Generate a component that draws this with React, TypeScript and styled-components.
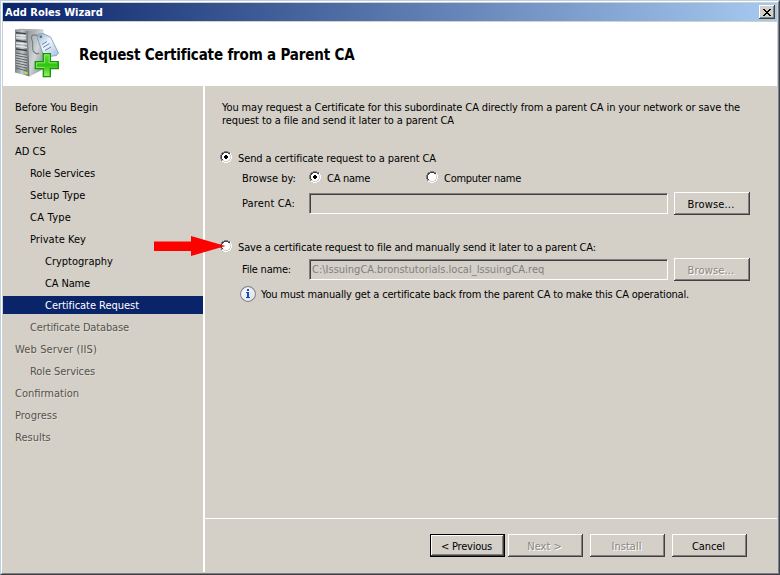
import React from 'react';
import styled, { createGlobalStyle, css } from 'styled-components';

const face = '#d4d0c8';
const navy = '#0a246a';

const GlobalStyle = createGlobalStyle`
  html, body { margin: 0; padding: 0; }
  body { background: ${face}; overflow: hidden; }
  *, *::before, *::after { box-sizing: border-box; }
`;

const Frame = styled.div`
  width: 780px;
  height: 575px;
  background: ${face};
  border-style: solid;
  border-width: 1px;
  border-color: #b9d1e6 #33455a #3c3c40 #b9d1e6;
  font: 11px/13px 'DejaVu Sans Condensed', 'DejaVu Sans', Tahoma, sans-serif;
  color: #000;
`;

const Bevel = styled.div`
  height: 100%;
  display: flex;
  flex-direction: column;
  border-style: solid;
  border-width: 1px;
  border-color: #fff #808080 #808080 #fff;
  padding: 1px;
`;

const TitleBar = styled.header`
  height: 18px;
  flex: none;
  display: flex;
  align-items: center;
  justify-content: space-between;
  padding: 0 2px;
  background: linear-gradient(to right, ${navy}, #a6caf0);
  color: #fff;
  font-weight: bold;
`;

const CloseButton = styled.button`
  width: 16px;
  height: 14px;
  padding: 0;
  display: flex;
  align-items: center;
  justify-content: center;
  background: ${face};
  border: 0;
  box-shadow: inset -1px -1px #404040, inset 1px 1px #fff, inset -2px -2px #808080;
`;

const Banner = styled.div`
  height: 64px;
  flex: none;
  margin-top: 1px;
  padding: 5px 0 0 11px;
  display: flex;
  gap: 17px;
  background: #fff;
`;

const Heading = styled.h1`
  margin: 19px 0 0;
  font-size: 15px;
  line-height: 18px;
  letter-spacing: -0.172px;
  white-space: nowrap;
`;

const Body = styled.div`
  flex: 1;
  min-height: 0;
  display: grid;
  grid-template-columns: 200px 1fr;
`;

const Nav = styled.nav`
  display: flex;
  flex-direction: column;
  gap: 4px;
  padding-top: 12px;
`;

const Step = styled.a<{ $level: number; $state?: 'current' | 'pending' }>`
  height: 18px;
  line-height: 18px;
  padding-top: 1px;
  padding-left: ${p => [12, 27, 42][p.$level]}px;
  white-space: nowrap;
  ${p => p.$state === 'current' && css`background: ${navy}; color: #fff;`}
  ${p => p.$state === 'pending' && css`color: #56534c; text-shadow: 1px 1px #e0ddd6;`}
`;

const Main = styled.main`
  display: flex;
  flex-direction: column;
  border-left: 2px solid #fff;
`;

const Content = styled.section`
  flex: 1;
  display: flex;
  flex-direction: column;
  padding: 15px 0 0 15px;
`;

const Text = styled.span<{ $track?: number }>`
  letter-spacing: ${p => p.$track ?? 0}px;
  white-space: nowrap;
`;

const Intro = styled.div`
  display: flex;
  flex-direction: column;
  padding-left: 2px;
  margin-bottom: 24px;
`;

const Option = styled.label`
  height: 14px;
  display: flex;
  align-items: center;
  gap: 6px;
`;

const BrowseBy = styled.div`
  height: 14px;
  margin-top: 6px;
  padding-left: 22px;
  display: grid;
  grid-template-columns: 67px 117px auto;
  align-items: center;
`;

const FieldRow = styled.div`
  height: 23px;
  display: grid;
  grid-template-columns: 67px 359px 76px;
  column-gap: 0;
  padding-left: 22px;
  align-items: center;
`;

const ParentRow = styled(FieldRow)`margin: 7px 0 25px;`;
const FileRow = styled(FieldRow)`margin-top: 4px;`;

const Field = styled.div`
  height: 21px;
  line-height: 17px;
  padding: 1px 0 0 2px;
  color: #808080;
  border-style: solid;
  border-width: 1px;
  border-color: #808080 #fff #fff #808080;
  box-shadow: inset 1px 1px #404040;
`;

const Button = styled.button<{ $focus?: boolean }>`
  width: 75px;
  height: 23px;
  padding: 1px 2px 0 0;
  border: ${p => (p.$focus ? '1px solid #000' : '0')};
  background: ${face};
  box-shadow: inset -1px -1px #404040, inset 1px 1px #fff, inset -2px -2px #808080;
  font: inherit;
  line-height: 13px;
  color: #000;
  &:disabled { color: #8a8882; text-shadow: 1px 1px #fff; }
`;

const BrowseButton = styled(Button)`
  width: 76px;
  margin-left: 6px;
`;

const Note = styled.div`
  height: 16px;
  margin-top: 5px;
  padding-left: 20px;
  display: flex;
  align-items: center;
  gap: 5px;
`;

const Footer = styled.footer`
  height: 54px;
  border-top: 1px solid #fff;
  padding: 15px 30px 0 0;
  display: flex;
  justify-content: flex-end;
  gap: 7px;
`;

const FlowButtons = styled.div`
  display: flex;
  gap: 3px;
`;

const RadioSlot = styled.span`
  position: relative;
  width: 12px;
  height: 12px;
  flex: none;
  display: block;
  margin-bottom: 2px;
`;

const Pointer = styled.svg`
  position: absolute;
  left: -66px;
  top: -4px;
`;

const Svg = styled.svg`
  display: block;
  flex: none;
`;

function Radio({ checked }: { checked?: boolean }) {
  return (
    <Svg width="12" height="12" viewBox="0 0 12 12" shapeRendering="crispEdges">
      <path fill="#fff" d="M4 2h4v1h1v1h1v4h-1v1h-1v1h-4v-1h-1v-1h-1v-4h1v-1h1z" />
      <path fill="#808080" d="M4 0h4v1h-4zM2 1h2v1h-2zM8 1h2v1h-2zM1 2h1v2h-1zM0 4h1v4h-1zM1 8h1v2h-1z" />
      <path fill="#404040" d="M4 1h4v1h-4zM2 2h2v1h-2zM8 2h2v1h-2zM2 3h1v1h-1zM1 4h1v4h-1zM2 8h1v1h-1z" />
      <path fill="#fff" d="M10 2h1v2h-1zM11 4h1v4h-1zM10 8h1v2h-1zM8 10h2v1h-2zM4 11h4v1h-4zM2 10h2v1h-2z" />
      {checked && <path fill="#000" d="M5 4h2v1h1v2h-1v1h-2v-1h-1v-2h1z" />}
    </Svg>
  );
}

function ServerIcon() {
  return (
    <Svg width="48" height="52" viewBox="14 28 48 52">
      <defs>
        <linearGradient id="side" x1="0" y1="0" x2="1" y2="1">
          <stop offset="0" stopColor="#8f9799" />
          <stop offset=".5" stopColor="#d2d6d6" />
          <stop offset="1" stopColor="#777e80" />
        </linearGradient>
        <linearGradient id="front" x1="0" y1="0" x2="1" y2="0">
          <stop offset="0" stopColor="#7e8688" />
          <stop offset=".5" stopColor="#c3c8c9" />
          <stop offset="1" stopColor="#62696c" />
        </linearGradient>
        <linearGradient id="tag" x1="0" y1="0" x2="1" y2="1">
          <stop offset="0" stopColor="#8fb0ca" />
          <stop offset=".45" stopColor="#eef5fb" />
          <stop offset="1" stopColor="#a0bfd8" />
        </linearGradient>
        <linearGradient id="plus" x1="0" y1="0" x2="0" y2="1">
          <stop offset="0" stopColor="#5fe63a" />
          <stop offset=".5" stopColor="#2fc414" />
          <stop offset="1" stopColor="#9cf35c" />
        </linearGradient>
      </defs>
      <path fill="url(#side)" d="M28 31.5 43.5 30.5V70L29.5 77.5z" />
      <path fill="url(#front)" d="M15 30.5 28 31.5 29.5 77.5 15 73.5z" />
      <path fill="#a4abad" d="M15 30.5 20 29.8 43.5 30.5 28 32z" />
      <path stroke="#3d4448" strokeWidth="1.4" d="M16 33.8l10 .8M16 41.5l10.5 1.2M16 50l11 1.5" />
      <path stroke="#e6e9e9" strokeWidth="1.3" d="M16 36l10 1M16 38.5l10 1M16 44l11 1.2M16 47l11 1.4" />
      <path stroke="#555c60" strokeWidth=".9" d="M16 54l11 2M16 56.5l11 2M16 59l11 2.2M16 61.5l11 2.4M16 64l11 2.5M16 66.5l11 2.7M16 69l11 3" />
      <path stroke="#d0d4d4" strokeWidth=".6" d="M16 55.3l11 2M16 57.8l11 2M16 60.3l11 2.2M16 62.8l11 2.4M16 65.3l11 2.6" />
      <path fill="#b8ed20" d="M24.5 72.5l3 .8v2l-3-.8z" />
      <path fill="none" stroke="#747d83" strokeWidth="1.1" d="M40 38C34 34 30 36 32 41c2 3-1 9 2 12 2 2 4 2 5 1" />
      <path fill="url(#tag)" stroke="#7995ad" strokeWidth=".8" d="M37 38.5 38.5 35 43 34.5 50.5 38 58.5 54 56.5 56.5 46 58 43.5 56z" />
      <circle cx="40.8" cy="37.8" r="1.3" fill="#526c80" />
      <path stroke="#6682b5" strokeWidth="1" d="M42 45.5l5-3M43 48.5l6.5-4M45 51.5l6-3.5" />
      <path fill="url(#plus)" stroke="#159409" strokeWidth="1.3" d="M43.3 54.7h7v8h8v7h-8v8h-7v-8h-8v-7h8z" />
      <path fill="none" stroke="#a8f584" strokeWidth=".7" d="M44.5 68.5h-8v-4.7h8v-8h4.7v8h8" />
    </Svg>
  );
}

function InfoIcon() {
  return (
    <Svg width="16" height="16" viewBox="0 0 16 16">
      <defs>
        <linearGradient id="disc" x1="0" y1="0" x2="1" y2="1">
          <stop offset="0" stopColor="#fff" />
          <stop offset="1" stopColor="#d5dce6" />
        </linearGradient>
      </defs>
      <circle cx="8" cy="8" r="7.4" fill="url(#disc)" stroke="#7c8187" strokeWidth="1.1" />
      <circle cx="8" cy="8" r="6.2" fill="none" stroke="#eef0f3" />
      <path fill="#1e49ba" d="M7 3h2v2h-2zM6 6h3v5h1v1h-4v-1h1v-4h-1z" />
    </Svg>
  );
}

type StepInfo = [label: string, level: number, track: number, state?: 'current' | 'pending'];

const steps: StepInfo[] = [
  ['Before You Begin', 0, -0.044],
  ['Server Roles', 0, 0],
  ['AD CS', 0, 0],
  ['Role Services', 1, -0.088],
  ['Setup Type', 1, 0.1],
  ['CA Type', 1, 0.25],
  ['Private Key', 1, 0.045],
  ['Cryptography', 2, 0],
  ['CA Name', 2, -0.146],
  ['Certificate Request', 2, -0.037, 'current'],
  ['Certificate Database', 1, -0.139, 'pending'],
  ['Web Server (IIS)', 0, 0.119, 'pending'],
  ['Role Services', 1, -0.088, 'pending'],
  ['Confirmation', 0, 0, 'pending'],
  ['Progress', 0, 0, 'pending'],
  ['Results', 0, 0, 'pending'],
];

export default function App() {
  return (
    <Frame>
      <GlobalStyle />
      <Bevel>
        <TitleBar>
          <Text>Add Roles Wizard</Text>
          <CloseButton aria-label="Close">
            <Svg width="8" height="7" viewBox="0 0 8 7" shapeRendering="crispEdges">
              <path d="M0 0h2v1h1v1h2v-1h1v-1h2v1h-1v1h-1v1h-1v1h1v1h1v1h1v1h-2v-1h-1v-1h-2v1h-1v1h-2v-1h1v-1h1v-1h1v-1h-1v-1h-1v-1h-1z" />
            </Svg>
          </CloseButton>
        </TitleBar>
        <Banner>
          <ServerIcon />
          <Heading>Request Certificate from a Parent CA</Heading>
        </Banner>
        <Body>
          <Nav>
            {steps.map(([label, level, track, state], i) => (
              <Step key={i} $level={level} $state={state}>
                <Text $track={track}>{label}</Text>
              </Step>
            ))}
          </Nav>
          <Main>
            <Content>
              <Intro>
                <Text $track={-0.117}>
                  You may request a Certificate for this subordinate CA directly from a parent CA in your network or save the
                </Text>
                <Text $track={-0.105}>request to a file and send it later to a parent CA</Text>
              </Intro>
              <Option>
                <RadioSlot><Radio checked /></RadioSlot>
                <Text $track={-0.113}>Send a certificate request to a parent CA</Text>
              </Option>
              <BrowseBy>
                <Text>Browse by:</Text>
                <Option>
                  <RadioSlot><Radio checked /></RadioSlot>
                  <Text $track={-0.27}>CA name</Text>
                </Option>
                <Option>
                  <RadioSlot><Radio /></RadioSlot>
                  <Text $track={-0.262}>Computer name</Text>
                </Option>
              </BrowseBy>
              <ParentRow>
                <Text $track={0.143}>Parent CA:</Text>
                <Field />
                <BrowseButton><Text $track={0.174}>Browse...</Text></BrowseButton>
              </ParentRow>
              <Option>
                <RadioSlot>
                  <Radio />
                  <Pointer width="72" height="20" viewBox="0 0 72 20">
                    <path fill="#f00" d="M0 5.5h37V0L71.5 10 37 20v-5H0z" />
                  </Pointer>
                </RadioSlot>
                <Text $track={-0.152}>Save a certificate request to file and manually send it later to a parent CA:</Text>
              </Option>
              <FileRow>
                <Text $track={-0.203}>File name:</Text>
                <Field><Text>C:\IssuingCA.bronstutorials.local_IssuingCA.req</Text></Field>
                <BrowseButton disabled><Text $track={0.174}>Browse...</Text></BrowseButton>
              </FileRow>
              <Note>
                <InfoIcon />
                <Text $track={-0.182}>
                  You must manually get a certificate back from the parent CA to make this CA operational.
                </Text>
              </Note>
            </Content>
            <Footer>
              <FlowButtons>
                <Button $focus><Text $track={-0.221}>&lt; Previous</Text></Button>
                <Button disabled><Text>Next &gt;</Text></Button>
              </FlowButtons>
              <Button disabled><Text>Install</Text></Button>
              <Button><Text $track={-0.089}>Cancel</Text></Button>
            </Footer>
          </Main>
        </Body>
      </Bevel>
    </Frame>
  );
}
